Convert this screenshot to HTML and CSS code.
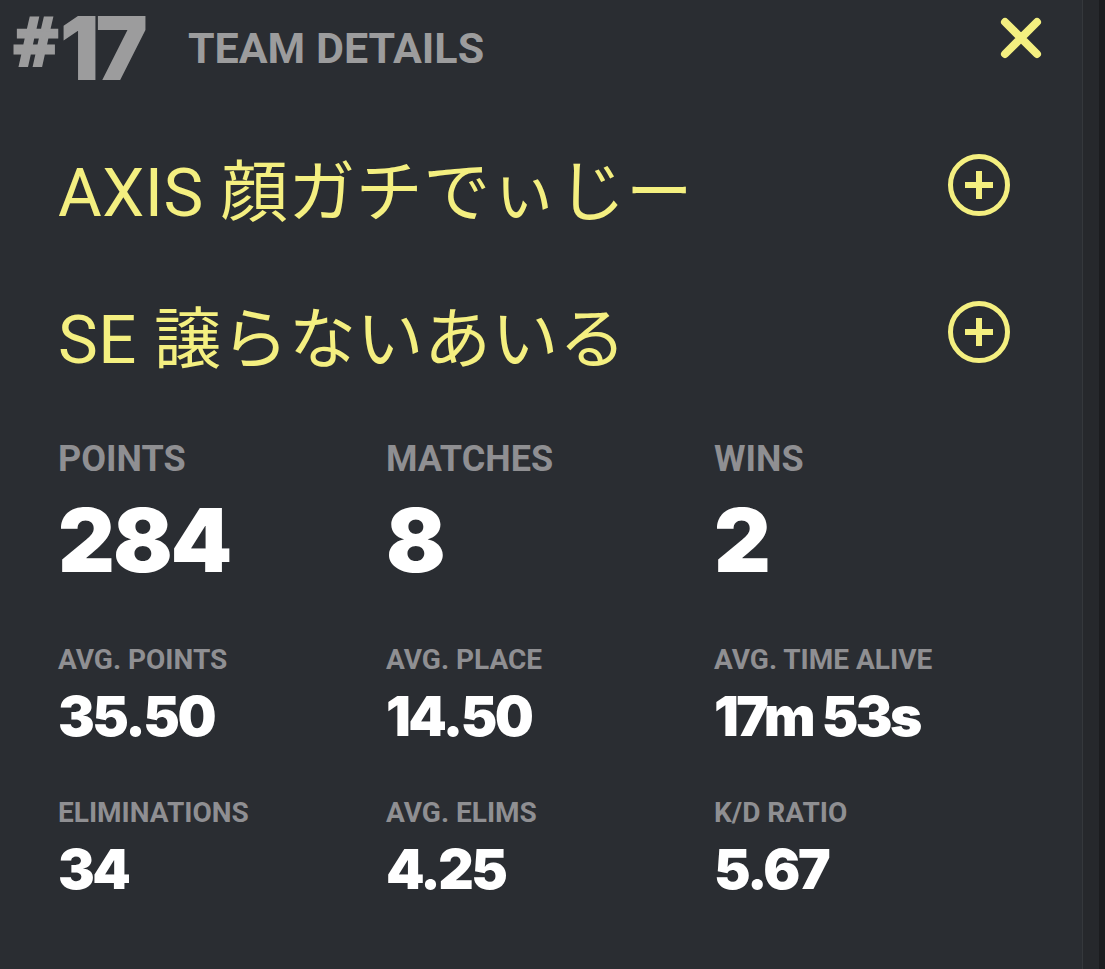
FILE: index.html
```html
<!DOCTYPE html>
<html>
<head>
    <title>Team Details</title>
    <meta name="viewport" content="width=device-width, initial-scale=1">
    <link rel="stylesheet" href="styles.css">
</head>
<body>
    <div class="panel">
        <div class="panel-head">
            <span class="rank"><span class="rank-hash">#</span>17</span>
            <h2 class="title">TEAM DETAILS</h2>
            <button class="close" aria-label="Close">
                <svg width="42" height="42" viewBox="0 0 42 42">
                    <path d="M5 5 L37 37 M37 5 L5 37" stroke="#f4ef80" stroke-width="8" stroke-linecap="round" fill="none"/>
                </svg>
            </button>
        </div>

        <ul class="players">
            <li class="player">
                <span class="player-name">AXIS 顔ガチでぃじー</span>
                <button class="add" aria-label="Add">
                    <svg width="64" height="64" viewBox="0 0 64 64">
                        <circle cx="32" cy="32" r="28.5" stroke="#f4ef80" stroke-width="5" fill="none"/>
                        <path d="M18 32 H46 M32 18 V46" stroke="#f4ef80" stroke-width="6" fill="none"/>
                    </svg>
                </button>
            </li>
            <li class="player">
                <span class="player-name">SE 譲らないあいる</span>
                <button class="add" aria-label="Add">
                    <svg width="64" height="64" viewBox="0 0 64 64">
                        <circle cx="32" cy="32" r="28.5" stroke="#f4ef80" stroke-width="5" fill="none"/>
                        <path d="M18 32 H46 M32 18 V46" stroke="#f4ef80" stroke-width="6" fill="none"/>
                    </svg>
                </button>
            </li>
        </ul>

        <div class="stats stats-main">
            <div class="stat">
                <div class="stat-label">POINTS</div>
                <div class="stat-value">284</div>
            </div>
            <div class="stat">
                <div class="stat-label">MATCHES</div>
                <div class="stat-value">8</div>
            </div>
            <div class="stat">
                <div class="stat-label">WINS</div>
                <div class="stat-value">2</div>
            </div>
        </div>

        <div class="stats stats-sub">
            <div class="stat">
                <div class="stat-label">AVG. POINTS</div>
                <div class="stat-value">35.50</div>
            </div>
            <div class="stat">
                <div class="stat-label">AVG. PLACE</div>
                <div class="stat-value">14.50</div>
            </div>
            <div class="stat">
                <div class="stat-label">AVG. TIME ALIVE</div>
                <div class="stat-value">17m 53s</div>
            </div>
            <div class="stat">
                <div class="stat-label">ELIMINATIONS</div>
                <div class="stat-value">34</div>
            </div>
            <div class="stat">
                <div class="stat-label">AVG. ELIMS</div>
                <div class="stat-value">4.25</div>
            </div>
            <div class="stat">
                <div class="stat-label">K/D RATIO</div>
                <div class="stat-value">5.67</div>
            </div>
        </div>
    </div>
    <div class="gutter"></div>
</body>
</html>
```

FILE: styles.css
```css
body {
    margin: 0;
    height: 969px;
    overflow: hidden;
    display: flex;
    background-color: #1b1c1f;
    font-family: Roboto, "Noto Sans CJK JP", sans-serif;
}

.panel {
    flex: 0 0 1082px;
    background-color: #2a2d32;
    border-right: 1px solid #35383c;
}

.gutter {
    flex: 0 0 16px;
    background-color: #26282c;
}

.panel-head {
    display: flex;
    align-items: flex-start;
    height: 93px;
    padding: 0 40px 0 11px;
}

.rank {
    margin-top: 3px;
    font-family: Inter, sans-serif;
    font-weight: 900;
    font-size: 88px;
    line-height: 90px;
    letter-spacing: -4px;
    white-space: nowrap;
    color: #9c9c9d;
}

.rank-hash {
    font-family: "DejaVu Sans Condensed", "DejaVu Sans", sans-serif;
    font-stretch: condensed;
    font-weight: 700;
    font-size: 66px;
    line-height: 0;
    letter-spacing: -1px;
    vertical-align: 15px;
    -webkit-text-stroke: 3px #9c9c9d;
}

.title {
    margin: 27px 0 0 44px;
    font-weight: 700;
    font-size: 43px;
    line-height: 43px;
    color: #9c9c9d;
}

.close {
    margin: 17px 0 0 auto;
    padding: 0;
    border: none;
    background: none;
    cursor: pointer;
}

.close svg,
.add svg {
    display: block;
}

.players {
    list-style: none;
    margin: 26px 0 0;
    padding: 0 71px 0 58px;
}

.player {
    display: flex;
    align-items: center;
    justify-content: space-between;
    height: 147px;
}

.player-name {
    font-size: 67px;
    line-height: 66px;
    letter-spacing: 0.5px;
    color: #f4ef80;
}

.add {
    margin-bottom: 15px;
    padding: 0;
    border: none;
    background: none;
    cursor: pointer;
}

.stats {
    display: grid;
    grid-template-columns: 328px 328px 328px;
    padding-left: 58px;
}

.stats-main {
    margin-top: 28px;
}

.stats-sub {
    margin-top: 62px;
    row-gap: 55px;
}

.stat-label {
    font-weight: 700;
    font-size: 28px;
    line-height: 28px;
    color: #8f8f92;
}

.stat-value {
    margin-top: 15px;
    font-family: Inter, sans-serif;
    font-weight: 900;
    font-size: 55px;
    line-height: 55px;
    letter-spacing: -2.5px;
    color: #ffffff;
}

.stats-main .stat-label {
    font-size: 36px;
    line-height: 36px;
}

.stats-main .stat-value {
    margin-top: 19px;
    font-size: 88px;
    line-height: 88px;
    letter-spacing: -2px;
}
```
